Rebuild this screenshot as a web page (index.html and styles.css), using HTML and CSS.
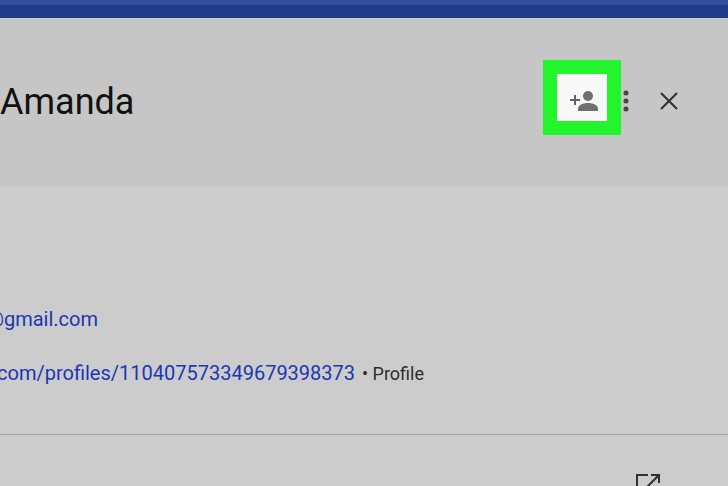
FILE: index.html
```
<!DOCTYPE html>
<html lang="en">
    <head>
        <meta charset="UTF-8">
        <title>Amanda</title>
        <link rel="stylesheet" href="styles.css">
    </head>
    <body>
        <div class="topbar"></div>
        <header class="header">
            <h1 class="name">Amanda</h1>
            <div class="actions">
                <button type="button" class="add" aria-label="Add to contacts">
                    <svg width="30" height="22" viewBox="0 0 30 22">
                        <path class="line" d="M6 5v10M1 10h10"/>
                        <circle class="fill" cx="19" cy="6" r="5"/>
                        <path class="fill" d="M9 21v-2c0-4 5-6 10-6s10 2 10 6v2z"/>
                    </svg>
                </button>
                <button type="button" class="more" aria-label="More actions">
                    <svg width="6" height="22" viewBox="0 0 6 22">
                        <circle cx="3" cy="3" r="2.5"/>
                        <circle cx="3" cy="11" r="2.5"/>
                        <circle cx="3" cy="19" r="2.5"/>
                    </svg>
                </button>
                <button type="button" class="close" aria-label="Close">
                    <svg width="18" height="18" viewBox="0 0 18 18">
                        <path d="M1 1l16 16M17 1L1 17"/>
                    </svg>
                </button>
            </div>
        </header>
        <main>
            <section class="details">
                <p class="row email"><a href="#">@gmail.com</a></p>
                <p class="row profile"><a href="#">com/profiles/110407573349679398373</a> <span class="type">• Profile</span></p>
            </section>
            <section class="links">
                <a href="#" class="open" aria-label="Open in new window">
                    <svg width="24" height="24" viewBox="0 0 24 24">
                        <path d="M12 1H1v22h22V12M15 1h8v8M23 1L8 16"/>
                    </svg>
                </a>
            </section>
        </main>
    </body>
</html>
```
FILE: styles.css
```
body {
    margin: 0;
    height: 100vh;
    overflow: hidden;
    background: #cccccc;
    color: #111;
    font-family: Roboto, "Liberation Sans", sans-serif;
}
.topbar {
    box-sizing: border-box;
    height: 18px;
    background: #1e3c8a;
    border-top: 5px solid #35509a;
    border-bottom: 1px solid #20346f;
}
.header {
    display: flex;
    justify-content: space-between;
    align-items: flex-start;
    box-sizing: border-box;
    height: 168px;
    padding: 41px 50px 0 0;
    background: #c6c6c6;
    border-top: 1px solid #c3d0d3;
}
.name {
    margin: 20px 0 0;
    font-size: 36px;
    line-height: 44px;
    font-weight: 400;
}
.actions {
    display: flex;
    align-items: center;
}
button {
    display: flex;
    align-items: center;
    justify-content: center;
    padding: 0;
    border: 0;
    background: none;
}
.add {
    box-sizing: border-box;
    width: 78px;
    height: 75px;
    padding-top: 6px;
    padding-left: 4px;
    border: 14px solid #22f52b;
    background: #f8f8f8;
}
.add .fill {
    fill: #707070;
}
.add .line {
    stroke: #606060;
    stroke-width: 2;
}
.more {
    margin: 6px 31px 0 2px;
    fill: #454545;
}
.close {
    margin-top: 6px;
}
.close svg {
    fill: none;
    stroke: #303030;
    stroke-width: 2;
}
.details {
    padding: 118px 0 45px;
    border-bottom: 1px solid #a9a9a9;
    white-space: nowrap;
}
.row {
    margin: 0;
    font-size: 20px;
    line-height: 30px;
}
.row + .row {
    margin-top: 24px;
}
.row a {
    color: #1c36b4;
    text-decoration: none;
}
.email {
    text-indent: -14px;
}
.profile {
    text-indent: -3px;
}
.type {
    margin-left: 2px;
    color: #2c2c2c;
    font-size: 18px;
}
.links {
    display: flex;
    justify-content: flex-end;
    padding: 39px 68px 0 0;
}
.open svg {
    display: block;
    fill: none;
    stroke: #303030;
    stroke-width: 2;
}
```
